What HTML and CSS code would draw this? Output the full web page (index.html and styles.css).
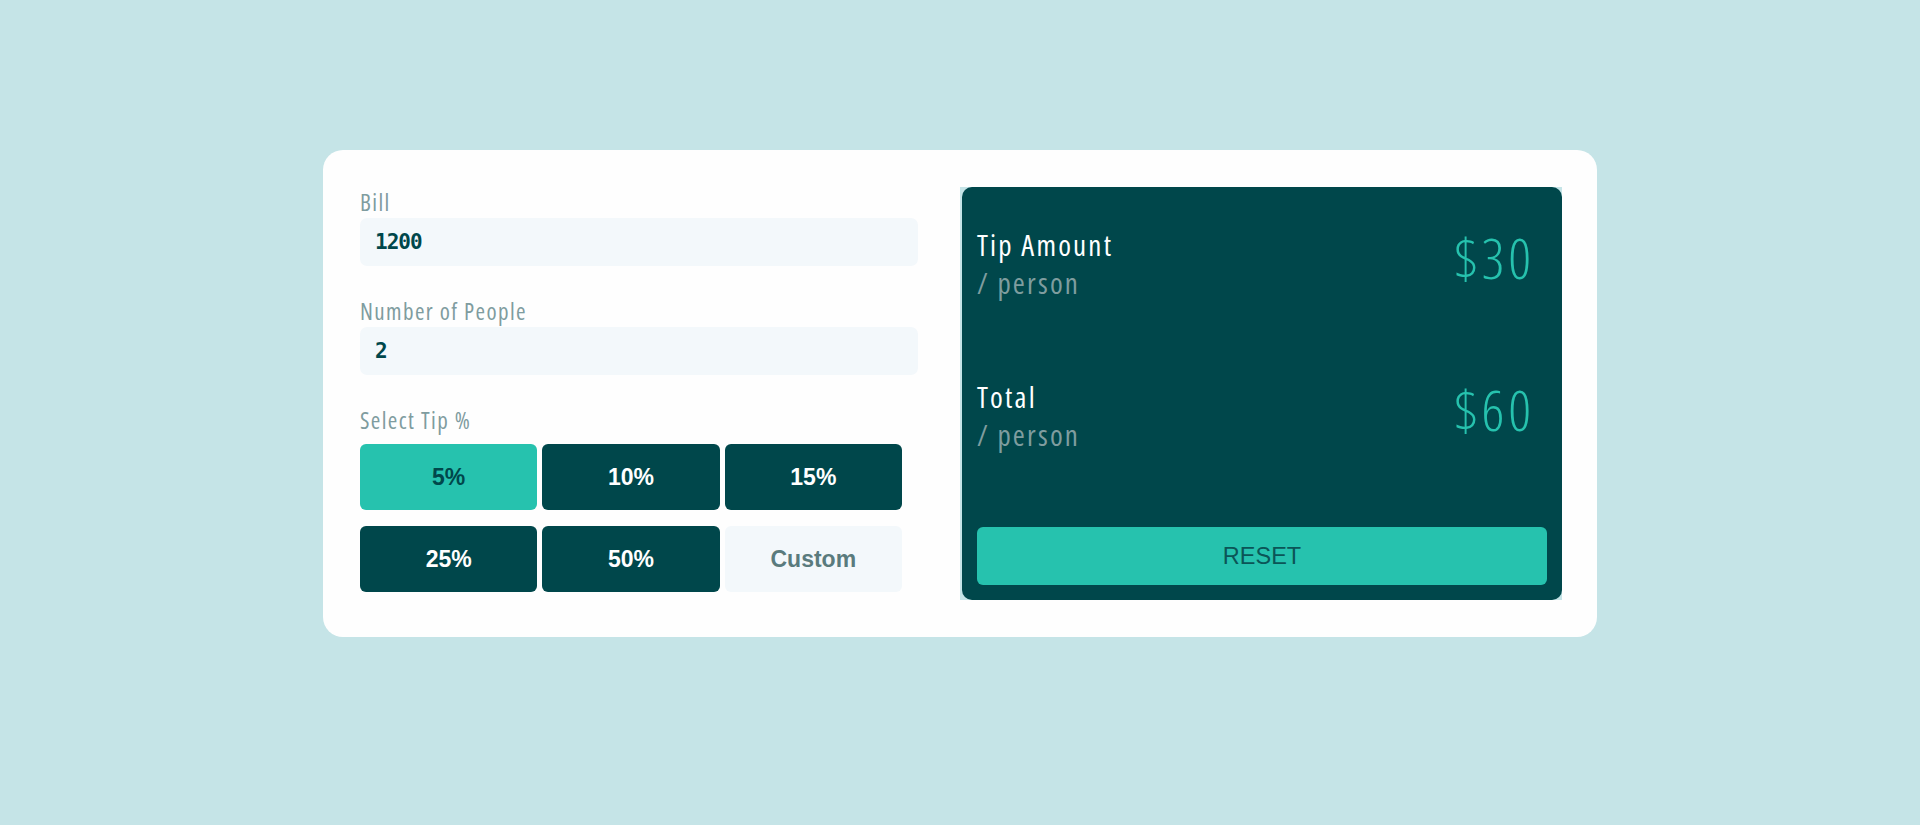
FILE: index.html
```html
<!DOCTYPE html>
<html lang="en">
<head>
<meta charset="utf-8">
<title>Tip Calculator</title>
<link rel="stylesheet" href="styles.css">
</head>
<body>
<main class="page">
  <section class="calc">
    <div class="inputs">
      <label class="field-label" for="bill">Bill</label>
      <input class="field-input" id="bill" type="text" value="1200">
      <label class="field-label gap" for="people">Number of People</label>
      <input class="field-input" id="people" type="text" value="2">
      <div class="field-label gap">Select Tip %</div>
      <div class="tip-grid">
        <button class="tip tip-active">5%</button>
        <button class="tip">10%</button>
        <button class="tip">15%</button>
        <button class="tip">25%</button>
        <button class="tip">50%</button>
        <button class="tip tip-custom">Custom</button>
      </div>
    </div>
    <div class="result-wrap">
      <div class="result">
        <div class="rows">
          <div class="row">
            <div class="row-text">
              <div class="row-title">Tip Amount</div>
              <div class="row-sub">/ person</div>
            </div>
            <div class="row-value">$30</div>
          </div>
          <div class="row">
            <div class="row-text">
              <div class="row-title">Total</div>
              <div class="row-sub">/ person</div>
            </div>
            <div class="row-value">$60</div>
          </div>
        </div>
        <button class="reset">RESET</button>
      </div>
    </div>
  </section>
</main>
</body>
</html>
```

FILE: styles.css
```css
* { box-sizing: border-box; }
html, body { margin: 0; }
body {
  background: #c5e4e7;
  font-family: "Open Sans", "Liberation Sans", sans-serif;
  min-height: 825px;
}
.page { padding-top: 150px; }
.calc {
  width: 1274px;
  margin: 0 auto;
  background: #fefefe;
  border-radius: 20px;
  padding: 37px 35px 37px 37px;
  display: grid;
  grid-template-columns: 558px 602px;
  column-gap: 42px;
}
.inputs { padding-top: 2px; display: flex; flex-direction: column; align-items: flex-start; }
.field-label {
  display: block;
  font-family: "Open Sans", sans-serif;
  font-weight: 400;
  font-stretch: 75%;
  font-size: 23px;
  letter-spacing: 1.4px;
  line-height: 26px;
  color: #7f9c9f;
}
.field-label.gap { margin-top: 32px; }
.field-input {
  display: block;
  width: 558px;
  height: 48px;
  margin-top: 3px;
  border: none;
  border-radius: 7px;
  background: #f3f8fb;
  padding: 0 15px;
  font-family: "DejaVu Sans Mono", monospace;
  font-weight: bold;
  font-size: 21px;
  letter-spacing: -1px;
  color: #00474b;
  outline: none;
}
.tip-grid {
  margin-top: 11px;
  width: 542px;
  display: grid;
  grid-template-columns: repeat(3, 1fr);
  grid-auto-rows: 66px;
  column-gap: 5px;
  row-gap: 16px;
}
.tip {
  border: none;
  border-radius: 6px;
  background: #00474b;
  color: #ffffff;
  font-family: "Liberation Sans", Arial, sans-serif;
  font-weight: bold;
  font-size: 23px;
  padding: 0;
}
.tip-active { background: #26c2ae; color: #00474b; }
.tip-custom { background: #f3f8fb; color: #5a7b7d; }
.result-wrap {
  background: #c5e4e7;
  padding-left: 2px;
}
.result {
  height: 100%;
  background: #00474b;
  border-radius: 10px;
  padding: 15px;
  display: flex;
  flex-direction: column;
}
.rows { padding-top: 24px; display: flex; flex-direction: column; gap: 76px; padding-right: 16px; }
.row { display: flex; justify-content: space-between; align-items: flex-start; }
.row-title, .row-sub {
  font-family: "Open Sans", sans-serif;
  font-weight: 400;
  font-stretch: 75%;
  font-size: 29px;
  letter-spacing: 2.2px;
  line-height: 38px;
}
.row-title { color: #ffffff; }
.row-sub { color: #7f9d9f; }
.row-value {
  margin-top: 3px;
  margin-right: -4px;
  font-family: "Open Sans", sans-serif;
  font-weight: 300;
  font-stretch: 75%;
  font-size: 56px;
  letter-spacing: 4px;
  line-height: 56px;
  color: #26c2ae;
}
.reset {
  margin-top: 73px;
  height: 58px;
  border: none;
  border-radius: 6px;
  background: #26c2ae;
  color: #0b5557;
  font-family: "Liberation Sans", Arial, sans-serif;
  font-size: 23.5px;
}
```
